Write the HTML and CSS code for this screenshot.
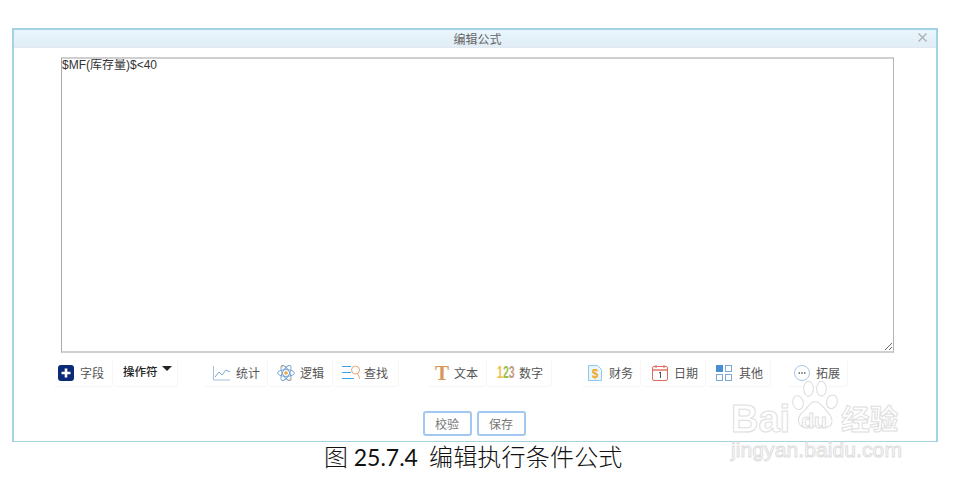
FILE: index.html
```html
<!DOCTYPE html>
<html lang="zh">
<head>
<meta charset="utf-8">
<title>编辑公式</title>
<link rel="stylesheet" href="styles.css">
</head>
<body>
<section class="dialog">
  <header class="titlebar">
    <span class="title">编辑公式</span>
    <svg class="close" width="9" height="9" viewBox="0 0 9 9"><path d="M.5.5l8 8M8.5.5l-8 8" stroke="#a9adb0" stroke-width="1.2" fill="none"/></svg>
  </header>
  <div class="content">
    <div class="editor-wrap">
      <textarea class="editor">$MF(库存量)$&lt;40</textarea>
    </div>
    <div class="toolbar">
      <div class="group">
        <button class="tool w60 pl5">
          <svg width="16" height="16" viewBox="0 0 16 16"><rect width="16" height="16" rx="3" fill="#0d2a78"/><path d="M8 3.5v9M3.5 8h9" stroke="#fff" stroke-width="2.6"/></svg>
          <span>字段</span>
        </button>
        <button class="tool w64 pl9 strong">
          <span class="raised">操作符</span>
          <svg class="caret" width="10" height="5" viewBox="0 0 10 5"><path d="M0 0h10L5 5z" fill="#222"/></svg>
        </button>
      </div>
      <div class="group g2">
        <button class="tool w64 pl9">
          <svg width="17" height="16" viewBox="0 0 17 16"><path d="M.5 1v14h16.5" stroke="#a9bfd6" fill="none"/><path d="M2 12l4-5 3 3 4-5 4 2" stroke="#7fa6cf" fill="none"/></svg>
          <span>统计</span>
        </button>
        <button class="tool w64 pl8 gap5">
          <svg width="18" height="18" viewBox="0 0 18 18" fill="none" stroke="#6f9fd0" stroke-width=".9"><ellipse cx="9" cy="9" rx="8.4" ry="3.4"/><ellipse cx="9" cy="9" rx="8.4" ry="3.4" transform="rotate(60 9 9)"/><ellipse cx="9" cy="9" rx="8.4" ry="3.4" transform="rotate(120 9 9)"/><circle cx="9" cy="9" r="1.8" fill="#eda63c" stroke="none"/><circle cx="4.8" cy="2.5" r="1" fill="#eda63c" stroke="none"/><circle cx="13.5" cy="15.5" r="1" fill="#eda63c" stroke="none"/></svg>
          <span>逻辑</span>
        </button>
        <button class="tool w65 pl8 gap4">
          <svg width="18" height="16" viewBox="0 0 18 16" fill="none"><path d="M0 1.5h9M0 7.5h9M0 13.5h12" stroke="#3aa3e8"/><circle cx="13.5" cy="5" r="4" stroke="#e2a675"/><path d="M15.5 8.5l2.5 5.5" stroke="#e2a675"/></svg>
          <span>查找</span>
        </button>
      </div>
      <div class="group g3">
        <button class="tool w59 pl7 gap7">
          <span class="serif-t">T</span>
          <span>文本</span>
        </button>
        <button class="tool w64 pl9 gap5">
          <span class="digits"><i class="d1">1</i><i class="d2">2</i><i class="d3">3</i></span>
          <span>数字</span>
        </button>
      </div>
      <div class="group g4">
        <button class="tool w60 pl7 gap7">
          <svg width="14" height="16" viewBox="0 0 14 16"><path d="M.5.5h9l4 4v11H.5z" fill="#eaf6fe" stroke="#8cc8ef"/><text x="7" y="13" text-anchor="middle" class="dollar">$</text></svg>
          <span>财务</span>
        </button>
        <button class="tool w64 pl10">
          <svg width="16" height="16" viewBox="0 0 16 16" fill="none"><rect x=".5" y="1.5" width="15" height="14" rx="1.5" stroke="#de6b5e"/><path d="M1 5h14" stroke="#de6b5e" stroke-width="1.4"/><path d="M4 0v3M12 0v3" stroke="#de6b5e"/><path d="M7 8l1.5-1v6" stroke="#555"/></svg>
          <span>日期</span>
        </button>
        <button class="tool w64 pl9 gap7">
          <svg width="16" height="16" viewBox="0 0 16 16" fill="none"><rect x="0" y="0" width="7" height="7" fill="#4a8ed2"/><rect x="9.5" y=".5" width="6" height="6" stroke="#7fa9d2"/><rect x=".5" y="9.5" width="6" height="6" stroke="#7fa9d2"/><rect x="9.5" y="9.5" width="6" height="6" stroke="#7fa9d2"/></svg>
          <span>其他</span>
        </button>
      </div>
      <div class="group g5">
        <button class="tool w60 pl6">
          <svg width="16" height="16" viewBox="0 0 16 16" fill="none"><circle cx="8" cy="8" r="7.5" stroke="#a9c6e4"/><path d="M4.6 8h1.4M7.3 8h1.4M10 8h1.4" stroke="#555" stroke-width="1.3"/></svg>
          <span>拓展</span>
        </button>
      </div>
    </div>
    <div class="actions">
      <button class="action">校验</button>
      <button class="action">保存</button>
    </div>
  </div>
</section>
<p class="caption">图 <span class="num">25.7.4</span>&nbsp; 编辑执行条件公式</p>
<aside class="watermark">
  <div class="wm-line">
    <span class="wm-bai">Bai</span>
    <span class="wm-paw">
      <svg width="50" height="54" viewBox="0 0 62 62" preserveAspectRatio="none" fill="#fff" stroke="#dcdcdc" stroke-width="1.2"><ellipse cx="10" cy="26" rx="6.5" ry="8" transform="rotate(-20 10 26)"/><ellipse cx="23" cy="10" rx="6" ry="8.5"/><ellipse cx="39" cy="10" rx="6" ry="8.5"/><ellipse cx="52" cy="25" rx="6.5" ry="8" transform="rotate(20 52 25)"/><path d="M31 25c-6 0-8 5-12 9-5 4-10 8-8 15 2 6 9 6 14 5 4-1 9-1 13 0 6 1 13 1 14-6 1-6-4-10-8-14-4-4-7-9-13-9z"/></svg>
      <span class="wm-du">du</span>
    </span>
    <span class="wm-cn">经验</span>
  </div>
  <div class="wm-url">jingyan.baidu.com</div>
</aside>
</body>
</html>
```
FILE: styles.css
```css
* { box-sizing: border-box; }
html, body { margin: 0; padding: 0; }
body {
  width: 954px;
  height: 482px;
  padding: 28px 16px 0 12px;
  background: #fff;
  position: relative;
  overflow: hidden;
  font-family: "Noto Sans CJK SC", "Liberation Sans", sans-serif;
}
.dialog {
  width: 926px;
  height: 414px;
  border: 1px solid #a3d3e2;
  border-top-width: 2px;
  border-right-width: 2px;
  border-left-width: 2px;
  display: flex;
  flex-direction: column;
}
.titlebar {
  height: 18px;
  flex: none;
  padding-left: 5px;
  background: linear-gradient(#eaf6fd, #e1edf6);
  border-bottom: 1px solid #e2e8ee;
  display: flex;
  align-items: center;
  justify-content: center;
  position: relative;
}
.title { font-size: 12px; line-height: 16px; color: #666; }
.close { position: absolute; right: 9px; top: 3px; }
.content { flex: 1; padding: 9px 0 0 47px; display: flex; flex-direction: column; }
.editor-wrap { width: 833px; height: 296px; }
.editor {
  display: block;
  width: 100%;
  height: 100%;
  margin: 0;
  padding: 0;
  border: 1px solid #a9a9a9;
  border-top: 2px solid #cfcfcf;
  border-right-color: #b5b5b5;
  border-bottom: 2px solid #cfcfcf;
  border-radius: 0;
  outline: none;
  font: 12px/13px "Liberation Sans", "Noto Sans CJK SC", sans-serif;
  color: #333;
}
.toolbar { display: flex; height: 28px; margin: 6px 0 0 -8px; }
.group { display: flex; gap: 1px; }
.g2 { margin-left: 26px; }
.g3 { margin-left: 29px; }
.g4 { margin-left: 29px; }
.g5 { margin-left: 17px; }
.tool {
  height: 28px;
  margin: 0;
  padding: 0;
  border: 0;
  border-right: 1px solid #f6f6f6;
  border-bottom: 1px solid #f6f6f6;
  border-radius: 3px;
  background: #fff;
  display: flex;
  align-items: center;
  gap: 6px;
  font: 12px/16px "Noto Sans CJK SC", sans-serif;
  color: #555;
}
.strong { color: #222; font-size: 11.5px; font-weight: 500; gap: 4px; }
.raised { margin-top: -4px; }
.caret { margin-top: -9px; }
.w59 { width: 59px; } .w60 { width: 60px; } .w64 { width: 64px; } .w65 { width: 65px; }
.pl5 { padding-left: 5px; } .pl6 { padding-left: 6px; } .pl7 { padding-left: 7px; }
.pl8 { padding-left: 8px; } .pl9 { padding-left: 9px; } .pl10 { padding-left: 10px; }
.gap4 { gap: 4px; } .gap5 { gap: 5px; } .gap7 { gap: 7px; }
.serif-t {
  width: 12px;
  font: bold 21px/20px "Liberation Serif", serif;
  color: #d9985a;
  text-align: center;
}
.digits { font: bold 16px/16px "Liberation Sans", sans-serif; width: 17px; display: flex; transform: scaleX(.66); transform-origin: left center; }
.digits i { font-style: normal; }
.d1 { color: #eec14a; } .d2 { color: #9bc04e; } .d3 { color: #c49a7d; }
.dollar { font: bold 12px "Liberation Sans", sans-serif; fill: #f0a51e; }
.actions { display: flex; justify-content: center; gap: 5px; margin: 24px 2px 0 -47px; }
.action {
  width: 49px;
  height: 25px;
  margin: 0;
  padding: 0;
  border: 2px solid #a3c8ef;
  border-radius: 3px;
  background: #fff;
  font: 12px/16px "Noto Sans CJK SC", sans-serif;
  color: #777;
}
.caption {
  margin: -2px 0 0;
  padding-left: 312px;
  font: 300 24px/32px "Noto Sans CJK SC", sans-serif;
  letter-spacing: .2px;
  color: #111;
  white-space: nowrap;
}
.num { font: 400 23px/32px Lato, sans-serif; letter-spacing: 0; }
.watermark {
  position: absolute;
  left: 731px;
  top: 380px;
  width: 180px;
  color: #fff;
  -webkit-text-stroke: 1px #dedede;
  font-family: "Liberation Sans", sans-serif;
}
.wm-line { display: flex; align-items: flex-end; height: 54px; position: relative; }
.wm-bai { font: bold 38px/32px "Liberation Sans", sans-serif; margin-bottom: -1px; }
.wm-paw { position: relative; width: 50px; height: 54px; margin-left: 0; flex: none; }
.wm-paw svg { position: absolute; left: 0; top: 0; }
.wm-du { position: absolute; left: 11px; bottom: 2px; font: bold 21px/22px "Liberation Sans", sans-serif; }
.wm-cn { font: bold 28.5px/32px "Noto Sans CJK SC", sans-serif; margin-left: 1px; white-space: nowrap; }
.wm-url { font: 21px/24px "Liberation Sans", sans-serif; letter-spacing: .1px; margin-top: 4px; white-space: nowrap; }
```
